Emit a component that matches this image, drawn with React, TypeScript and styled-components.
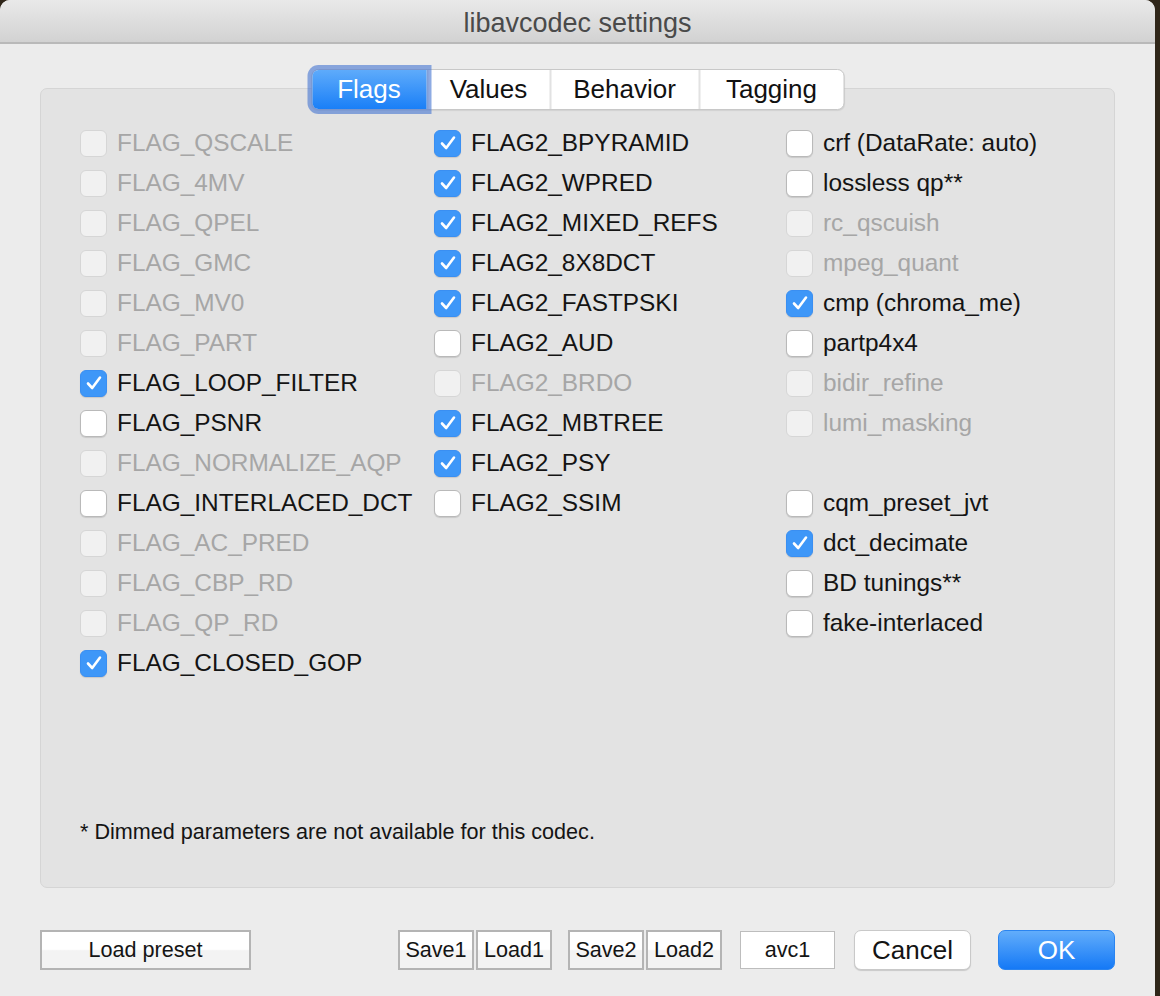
import styled, { createGlobalStyle, css } from "styled-components";

const GlobalStyle = createGlobalStyle`
  html, body {
    margin: 0;
    padding: 0;
    background: #2f2619;
  }
  body {
    font-family: "Liberation Sans", Arial, sans-serif;
  }
  * {
    box-sizing: border-box;
  }
`;

const Window = styled.div`
  width: 1155px;
  height: 996px;
  background: #ececec;
  border-radius: 10px 10px 0 0;
  overflow: hidden;
  display: flex;
  flex-direction: column;
`;

const TitleBar = styled.div`
  height: 44px;
  flex-shrink: 0;
  display: flex;
  align-items: center;
  justify-content: center;
  background: linear-gradient(#e9e9e9, #d2d2d2);
  border-bottom: 2px solid #b9b9b9;
  font-size: 27px;
  color: #4a4a4a;
  padding-top: 4px;
`;

const Body = styled.div`
  flex: 1;
  display: flex;
  flex-direction: column;
  padding: 44px 40px 0 40px;
`;

const Panel = styled.div`
  position: relative;
  height: 800px;
  background: #e3e3e3;
  border: 1px solid #d5d5d5;
  border-radius: 7px;
  display: flex;
  flex-direction: column;
  padding: 34px 0 0 39px;
`;

const TabStrip = styled.div`
  position: absolute;
  top: -20px;
  left: 50%;
  transform: translateX(-50%);
  display: flex;
  height: 41px;
  background: #ffffff;
  border: 1px solid #c8c8c8;
  border-radius: 7px;
  box-shadow: 0 1px 1px rgba(0, 0, 0, 0.08);
`;

const Tab = styled.div<{ $active?: boolean; $width: number }>`
  width: ${(p) => p.$width}px;
  display: flex;
  align-items: center;
  justify-content: center;
  font-size: 26px;
  color: #111;
  border-left: 2px solid #e2e2e2;
  &:first-child {
    border-left: none;
  }
  ${(p) =>
    p.$active &&
    css`
      position: relative;
      color: #fff;
      background: linear-gradient(#5eabfb, #1a7ff7);
      border-radius: 6px 0 0 6px;
      box-shadow: 0 0 0 5px rgba(72, 120, 210, 0.62);
    `}
`;

const Grid = styled.div`
  display: grid;
  grid-template-columns: 354px 352px 1fr;
  align-items: start;
`;

const Column = styled.div`
  display: flex;
  flex-direction: column;
`;

const Row = styled.div<{ $disabled?: boolean }>`
  height: 40px;
  display: flex;
  align-items: center;
  gap: 10px;
  font-size: 24.4px;
  color: ${(p) => (p.$disabled ? "#a6a6a6" : "#141414")};
`;

const Box = styled.span<{ $checked?: boolean; $disabled?: boolean }>`
  width: 27px;
  height: 27px;
  flex-shrink: 0;
  border-radius: 6px;
  display: flex;
  align-items: center;
  justify-content: center;
  background: ${(p) =>
    p.$checked ? "#3e97f8" : p.$disabled ? "#f1f1f1" : "#ffffff"};
  border: 1px solid
    ${(p) => (p.$checked ? "#3a8ff2" : p.$disabled ? "#d6d6d6" : "#b9b9b9")};
  box-shadow: ${(p) =>
    p.$disabled ? "none" : "0 1px 1px rgba(0, 0, 0, 0.12)"};
`;

const Note = styled.div`
  margin-top: auto;
  margin-bottom: 42px;
  font-size: 21.6px;
  color: #141414;
`;

const Footer = styled.div`
  display: flex;
  align-items: center;
  height: 42px;
  margin-top: 41px;
`;

const SquareButton = styled.div<{ $width: number }>`
  width: ${(p) => p.$width}px;
  height: 40px;
  display: flex;
  align-items: center;
  justify-content: center;
  border: 2px solid #b4b4b4;
  background: linear-gradient(#ffffff 0%, #ffffff 48%, #f3f3f3 52%, #f3f3f3 100%);
  font-size: 21.6px;
  color: #141414;
`;

const ButtonPair = styled.div<{ $ml: number }>`
  display: flex;
  gap: 2px;
  margin-left: ${(p) => p.$ml}px;
`;

const CodecField = styled.div`
  width: 95px;
  height: 38px;
  margin-left: 18px;
  display: flex;
  align-items: center;
  justify-content: center;
  background: #fff;
  border: 1px solid #bdbdbd;
  font-size: 21.6px;
  color: #141414;
`;

const PushButton = styled.div<{ $primary?: boolean; $ml: number }>`
  width: 117px;
  height: 40px;
  margin-left: ${(p) => p.$ml}px;
  display: flex;
  align-items: center;
  justify-content: center;
  border-radius: 7px;
  font-size: 26px;
  ${(p) =>
    p.$primary
      ? css`
          color: #fff;
          background: linear-gradient(#62adfb, #1579f6);
          border: 1px solid #2a84f0;
        `
      : css`
          color: #141414;
          background: #fff;
          border: 1px solid #c9c9c9;
          box-shadow: 0 1px 1px rgba(0, 0, 0, 0.15);
        `}
`;

type Item = { label: string; checked?: boolean; disabled?: boolean } | null;

const col1: Item[] = [
  { label: "FLAG_QSCALE", disabled: true },
  { label: "FLAG_4MV", disabled: true },
  { label: "FLAG_QPEL", disabled: true },
  { label: "FLAG_GMC", disabled: true },
  { label: "FLAG_MV0", disabled: true },
  { label: "FLAG_PART", disabled: true },
  { label: "FLAG_LOOP_FILTER", checked: true },
  { label: "FLAG_PSNR" },
  { label: "FLAG_NORMALIZE_AQP", disabled: true },
  { label: "FLAG_INTERLACED_DCT" },
  { label: "FLAG_AC_PRED", disabled: true },
  { label: "FLAG_CBP_RD", disabled: true },
  { label: "FLAG_QP_RD", disabled: true },
  { label: "FLAG_CLOSED_GOP", checked: true },
];

const col2: Item[] = [
  { label: "FLAG2_BPYRAMID", checked: true },
  { label: "FLAG2_WPRED", checked: true },
  { label: "FLAG2_MIXED_REFS", checked: true },
  { label: "FLAG2_8X8DCT", checked: true },
  { label: "FLAG2_FASTPSKI", checked: true },
  { label: "FLAG2_AUD" },
  { label: "FLAG2_BRDO", disabled: true },
  { label: "FLAG2_MBTREE", checked: true },
  { label: "FLAG2_PSY", checked: true },
  { label: "FLAG2_SSIM" },
];

const col3: Item[] = [
  { label: "crf (DataRate: auto)" },
  { label: "lossless qp**" },
  { label: "rc_qscuish", disabled: true },
  { label: "mpeg_quant", disabled: true },
  { label: "cmp (chroma_me)", checked: true },
  { label: "partp4x4" },
  { label: "bidir_refine", disabled: true },
  { label: "lumi_masking", disabled: true },
  null,
  { label: "cqm_preset_jvt" },
  { label: "dct_decimate", checked: true },
  { label: "BD tunings**" },
  { label: "fake-interlaced" },
];

function Check() {
  return (
    <svg width="20" height="20" viewBox="0 0 20 20">
      <path
        d="M4 10.5 L8.2 15 L16 4.5"
        fill="none"
        stroke="#fff"
        strokeWidth="2.6"
        strokeLinecap="round"
        strokeLinejoin="round"
      />
    </svg>
  );
}

function CheckColumn({ items }: { items: Item[] }) {
  return (
    <Column>
      {items.map((item, i) =>
        item ? (
          <Row key={item.label} $disabled={item.disabled}>
            <Box $checked={item.checked} $disabled={item.disabled}>
              {item.checked && <Check />}
            </Box>
            {item.label}
          </Row>
        ) : (
          <Row key={`gap-${i}`} />
        ),
      )}
    </Column>
  );
}

export default function App() {
  return (
    <>
      <GlobalStyle />
      <Window>
        <TitleBar>libavcodec settings</TitleBar>
        <Body>
          <Panel>
            <TabStrip>
              <Tab $active $width={114}>
                Flags
              </Tab>
              <Tab $width={123}>Values</Tab>
              <Tab $width={149}>Behavior</Tab>
              <Tab $width={145}>Tagging</Tab>
            </TabStrip>
            <Grid>
              <CheckColumn items={col1} />
              <CheckColumn items={col2} />
              <CheckColumn items={col3} />
            </Grid>
            <Note>* Dimmed parameters are not available for this codec.</Note>
          </Panel>
          <Footer>
            <SquareButton $width={211}>Load preset</SquareButton>
            <ButtonPair $ml={147}>
              <SquareButton $width={76}>Save1</SquareButton>
              <SquareButton $width={76}>Load1</SquareButton>
            </ButtonPair>
            <ButtonPair $ml={16}>
              <SquareButton $width={76}>Save2</SquareButton>
              <SquareButton $width={76}>Load2</SquareButton>
            </ButtonPair>
            <CodecField>avc1</CodecField>
            <PushButton $ml={19}>Cancel</PushButton>
            <PushButton $primary $ml={27}>
              OK
            </PushButton>
          </Footer>
        </Body>
      </Window>
    </>
  );
}
